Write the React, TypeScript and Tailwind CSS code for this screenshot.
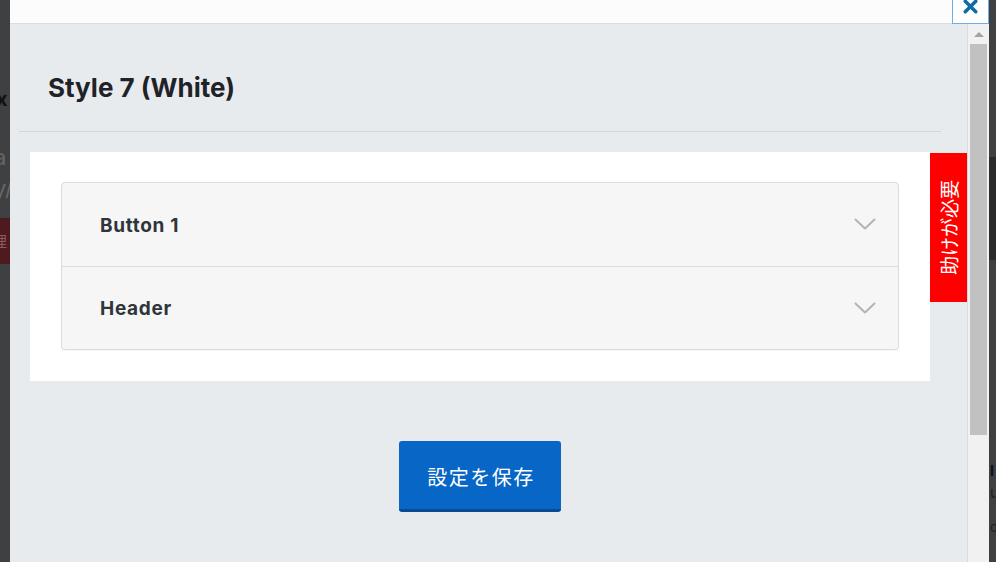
import { X } from "lucide-react";

const latin = "font-['Inter','Noto_Sans','Noto_Sans_CJK_JP',sans-serif]";
const jp = "font-['Noto_Sans_CJK_JP','Noto_Sans',sans-serif]";

function Chevron() {
	return (
		<svg width="22" height="13" viewBox="0 0 22 13" fill="none">
			<path d="M1.5 1.5 L11 10.5 L20.5 1.5" stroke="#b4b4b4" strokeWidth="2" strokeLinecap="round" strokeLinejoin="round" />
		</svg>
	);
}

function AccordionRow({ label, divider }: { label: string; divider?: boolean }) {
	return (
		<div className={`flex h-[83px] items-center justify-between pl-[38px] pr-[22px] ${divider ? "border-t border-[#dcdcdc]" : ""}`}>
			<span className={`${latin} pt-[3px] text-[19px] font-bold tracking-[0.7px] text-[#2f353b]`}>{label}</span>
			<Chevron />
		</div>
	);
}

export default function App() {
	return (
		<div className="relative h-[562px] w-[996px] overflow-hidden bg-[#3f4042]">
			{/* page behind the dimmed overlay */}
			<div className={`${latin} absolute left-[-4px] top-[84px] text-[20px] font-bold text-[#111]`}>x</div>
			<div className={`${latin} absolute left-[-6px] top-[141px] text-[22px] text-[#666]`}>a</div>
			<div className={`${latin} absolute left-[-6px] top-[172px] text-[22px] text-[#666]`}>y/c</div>
			<div className="absolute left-0 top-[218px] h-[46px] w-[12px] bg-[#4e1a20]">
				<span className={`${jp} ml-[-8px] mt-[12px] block text-[15px] text-[#8a5a5e]`}>理</span>
			</div>
			<div className="absolute left-[989px] top-[157px] h-[103px] w-[8px] bg-[#2b2b2b]" />
			<div className={`${latin} absolute left-[990px] top-[460px] text-[15px] font-bold text-[#111]`}>l</div>
			<div className={`${latin} absolute left-[990px] top-[482px] text-[15px] text-[#222]`}>u</div>
			<div className={`${latin} absolute left-[990px] top-[518px] text-[13px] text-[#222]`}>o</div>

			{/* modal */}
			<div className="absolute left-[10px] top-0 flex h-[600px] w-[979px] flex-col">
				<div className="h-[24px] border-b border-[#dcdcde] bg-[#fcfcfc]" />
				<div className="flex flex-1">
					<div className="flex w-[957px] flex-col bg-[#e8ebee]">
						<div className="ml-[9px] mr-[26px] border-b border-[#d3d5d8] pb-[27px] pl-[29px] pt-[48px]">
							<h1 className={`${latin} text-[26px] font-bold leading-[32px] text-[#1f2328]`}>Style 7 (White)</h1>
						</div>
						<div className="mt-[20px] flex items-start">
							<div className="ml-[20px] w-[901px] bg-white px-[31px] pb-[31px] pt-[30px]">
								<div className="overflow-hidden rounded-[4px] border border-[#dcdcdc] bg-[#f6f6f6] shadow-[0_1px_1px_rgba(0,0,0,0.04)]">
									<AccordionRow label="Button 1" />
									<AccordionRow label="Header" divider />
								</div>
							</div>
							<div className="mt-[1px] flex h-[149px] w-[37px] items-center justify-center bg-[#ff0000]">
								<span className={`${jp} rotate-180 text-[19px] leading-none text-white [text-orientation:sideways] [writing-mode:vertical-rl]`}>
									助けが必要
								</span>
							</div>
						</div>
						<div className="ml-[20px] mt-[60px] flex w-[900px] justify-center">
							<button className={`${jp} h-[71px] w-[162px] rounded-[3px] border-b-[3px] border-[#084a94] bg-[#0866c6] pl-[2px] pt-[3px] text-[20px] tracking-[1.5px] text-white`}>
								設定を保存
							</button>
						</div>
					</div>
					{/* scrollbar */}
					<div className="flex w-[22px] flex-col border-l border-[#d9dcdf] bg-[#f1f1f1] px-[2px]">
						<div className="flex h-[20px] items-center justify-center">
							<div className="h-0 w-0 border-x-[5px] border-b-[5px] border-x-transparent border-b-[#a3a3a3]" />
						</div>
						<div className="h-[391px] bg-[#c1c1c1]" />
					</div>
				</div>
			</div>

			{/* close button */}
			<button className="absolute left-[952px] top-[-12px] flex h-[36px] w-[37px] items-center justify-center border border-[#72aee6] bg-white">
				<X size={21} strokeWidth={4} color="#0f6aa8" />
			</button>
		</div>
	);
}
